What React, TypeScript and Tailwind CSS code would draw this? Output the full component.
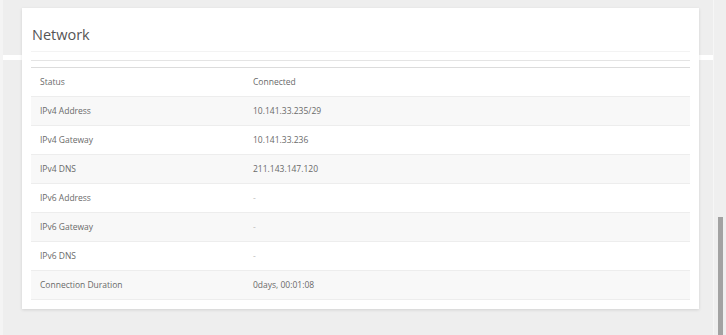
import React from 'react';

// Network info rows, as shown on the status page
const rows: { label: string; value: string }[] = [
  { label: 'Status', value: 'Connected' },
  { label: 'IPv4 Address', value: '10.141.33.235/29' },
  { label: 'IPv4 Gateway', value: '10.141.33.236' },
  { label: 'IPv4 DNS', value: '211.143.147.120' },
  { label: 'IPv6 Address', value: '-' },
  { label: 'IPv6 Gateway', value: '-' },
  { label: 'IPv6 DNS', value: '-' },
  { label: 'Connection Duration', value: '0days, 00:01:08' },
];

const InfoRow = ({ label, value, striped }: { label: string; value: string; striped: boolean }) => {
  return (
    <div
      className={`flex items-center h-[29px] border-b border-[#ededed] ${
        striped ? 'bg-[#f8f8f8]' : 'bg-white'
      }`}
    >
      <span className="w-[222px] pl-[9px] text-[8.5px] text-[#6a6a6a]">{label}</span>
      <span className={`text-[8.5px] ${value === '-' ? 'text-[#bbb]' : 'text-[#6a6a6a]'}`}>{value}</span>
    </div>
  );
};

export default function App() {
  return (
    <div
      className="relative w-[726px] h-[335px] overflow-hidden bg-[#eeeeee] border-l-[3px] border-[#f4f4f4]"
      style={{ fontFamily: '"Open Sans", "Noto Sans", sans-serif' }}
    >
      {/* white band behind the card */}
      <div className="absolute left-0 right-0 top-[55px] h-[5px] bg-white" />

      {/* scrollbar */}
      <div className="absolute right-0 top-0 bottom-0 w-[13px] bg-[#efefef] border-l border-[#f6f6f6]" />
      <div className="absolute right-[3px] top-[217px] bottom-0 w-[5px] bg-[#a2a2a2]" />

      <div className="relative z-10 ml-[19px] mt-[8px] w-[677px] bg-white px-[9px] pb-[9px] shadow-[0_1px_3px_rgba(0,0,0,0.12)]">
        {/* Header */}
        <div className="h-[44px] pt-[10px] flex items-center border-b border-[#f3f3f3] pl-px">
          <h2 className="text-[14.5px] text-[#555]">Network</h2>
        </div>

        <div className="mt-[8px] border-t border-[#e4e4e4] pt-[6px]">
          <div className="border-t border-[#dcdcdc]">
            {rows.map((r, i) => (
              <InfoRow key={r.label} label={r.label} value={r.value} striped={i % 2 === 1 && i !== 5 ? true : i === 5} />
            ))}
          </div>
        </div>
      </div>
    </div>
  );
}
